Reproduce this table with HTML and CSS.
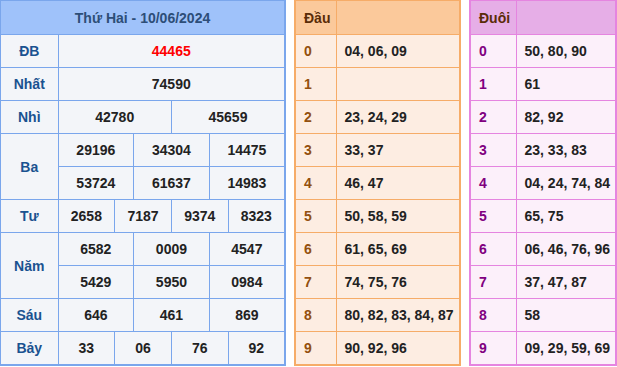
FILE: index.html
```html
<!DOCTYPE html>
<html lang="vi">
<head>
<meta charset="utf-8">
<link rel="stylesheet" href="styles.css">
</head>
<body>
<div class="wrap">
  <table class="kq">
    <colgroup>
      <col class="c-label">
      <col><col><col><col><col><col><col><col><col><col><col><col>
    </colgroup>
    <thead>
      <tr><th colspan="13" class="title">Thứ Hai - 10/06/2024</th></tr>
    </thead>
    <tbody>
      <tr><td class="lbl">ĐB</td><td colspan="12" class="db">44465</td></tr>
      <tr><td class="lbl">Nhất</td><td colspan="12">74590</td></tr>
      <tr><td class="lbl">Nhì</td><td colspan="6">42780</td><td colspan="6">45659</td></tr>
      <tr><td class="lbl" rowspan="2">Ba</td><td colspan="4">29196</td><td colspan="4">34304</td><td colspan="4">14475</td></tr>
      <tr><td colspan="4">53724</td><td colspan="4">61637</td><td colspan="4">14983</td></tr>
      <tr><td class="lbl">Tư</td><td colspan="3">2658</td><td colspan="3">7187</td><td colspan="3">9374</td><td colspan="3">8323</td></tr>
      <tr><td class="lbl" rowspan="2">Năm</td><td colspan="4">6582</td><td colspan="4">0009</td><td colspan="4">4547</td></tr>
      <tr><td colspan="4">5429</td><td colspan="4">5950</td><td colspan="4">0984</td></tr>
      <tr><td class="lbl">Sáu</td><td colspan="4">646</td><td colspan="4">461</td><td colspan="4">869</td></tr>
      <tr><td class="lbl">Bảy</td><td colspan="3">33</td><td colspan="3">06</td><td colspan="3">76</td><td colspan="3">92</td></tr>
    </tbody>
  </table>

  <table class="lt dau">
    <colgroup><col class="c-key"><col></colgroup>
    <thead><tr><th>Đầu</th><th></th></tr></thead>
    <tbody>
      <tr><td class="k">0</td><td>04, 06, 09</td></tr>
      <tr><td class="k">1</td><td></td></tr>
      <tr><td class="k">2</td><td>23, 24, 29</td></tr>
      <tr><td class="k">3</td><td>33, 37</td></tr>
      <tr><td class="k">4</td><td>46, 47</td></tr>
      <tr><td class="k">5</td><td>50, 58, 59</td></tr>
      <tr><td class="k">6</td><td>61, 65, 69</td></tr>
      <tr><td class="k">7</td><td>74, 75, 76</td></tr>
      <tr><td class="k">8</td><td>80, 82, 83, 84, 87</td></tr>
      <tr><td class="k">9</td><td>90, 92, 96</td></tr>
    </tbody>
  </table>

  <table class="lt duoi">
    <colgroup><col class="c-key2"><col></colgroup>
    <thead><tr><th>Đuôi</th><th></th></tr></thead>
    <tbody>
      <tr><td class="k">0</td><td>50, 80, 90</td></tr>
      <tr><td class="k">1</td><td>61</td></tr>
      <tr><td class="k">2</td><td>82, 92</td></tr>
      <tr><td class="k">3</td><td>23, 33, 83</td></tr>
      <tr><td class="k">4</td><td>04, 24, 74, 84</td></tr>
      <tr><td class="k">5</td><td>65, 75</td></tr>
      <tr><td class="k">6</td><td>06, 46, 76, 96</td></tr>
      <tr><td class="k">7</td><td>37, 47, 87</td></tr>
      <tr><td class="k">8</td><td>58</td></tr>
      <tr><td class="k">9</td><td>09, 29, 59, 69</td></tr>
    </tbody>
  </table>
</div>
</body>
</html>
```

FILE: styles.css
```css
html, body {
  margin: 0;
  padding: 0;
  background: #ffffff;
}
body {
  font-family: "Liberation Sans", Arial, sans-serif;
  font-size: 14px;
  font-weight: bold;
  color: #222222;
}
.wrap {
  display: flex;
  align-items: flex-start;
  padding: 0;
  margin-top: -1px;
  margin-left: -1px;
}
table {
  border-collapse: collapse;
  table-layout: fixed;
}
td, th {
  padding: 0;
  height: 32px;
  line-height: 16px;
}
/* main results table */
.kq {
  width: 287px;
  border: 2px solid #7aa6ec;
  background: #f3f5f9;
}
.kq td, .kq th {
  border: 1px solid #7aa6ec;
  text-align: center;
}
.kq .c-label { width: 58px; }
.kq .title {
  height: 33px;
  background: #9fc2fa;
  color: #2d4e78;
  font-weight: bold;
}
.kq .lbl { color: #1a5290; }
.kq .db { color: #ff0000; }

/* loto tables */
.lt {
  border: 2px solid;
  text-align: left;
}
.lt td, .lt th {
  border: 1px solid;
  padding-left: 8px;
  text-align: left;
}
.lt th { height: 33px; }
.dau {
  width: 167px;
  margin-left: 8px;
  border-color: #f6ac68;
  background: #fdede2;
}
.dau td, .dau th { border-color: #f6ac68; }
.dau th { background: #fbc99b; color: #5a2c08; }
.dau .c-key { width: 41px; }
.dau .k { color: #93500f; }

.duoi {
  width: 148px;
  margin-left: 8px;
  border-color: #e585e0;
  background: #fcf0fa;
}
.duoi td, .duoi th { border-color: #e585e0; }
.duoi th { background: #e6aee7; color: #5a2c08; }
.duoi .c-key2 { width: 46px; }
.duoi .k { color: #800080; }
```
